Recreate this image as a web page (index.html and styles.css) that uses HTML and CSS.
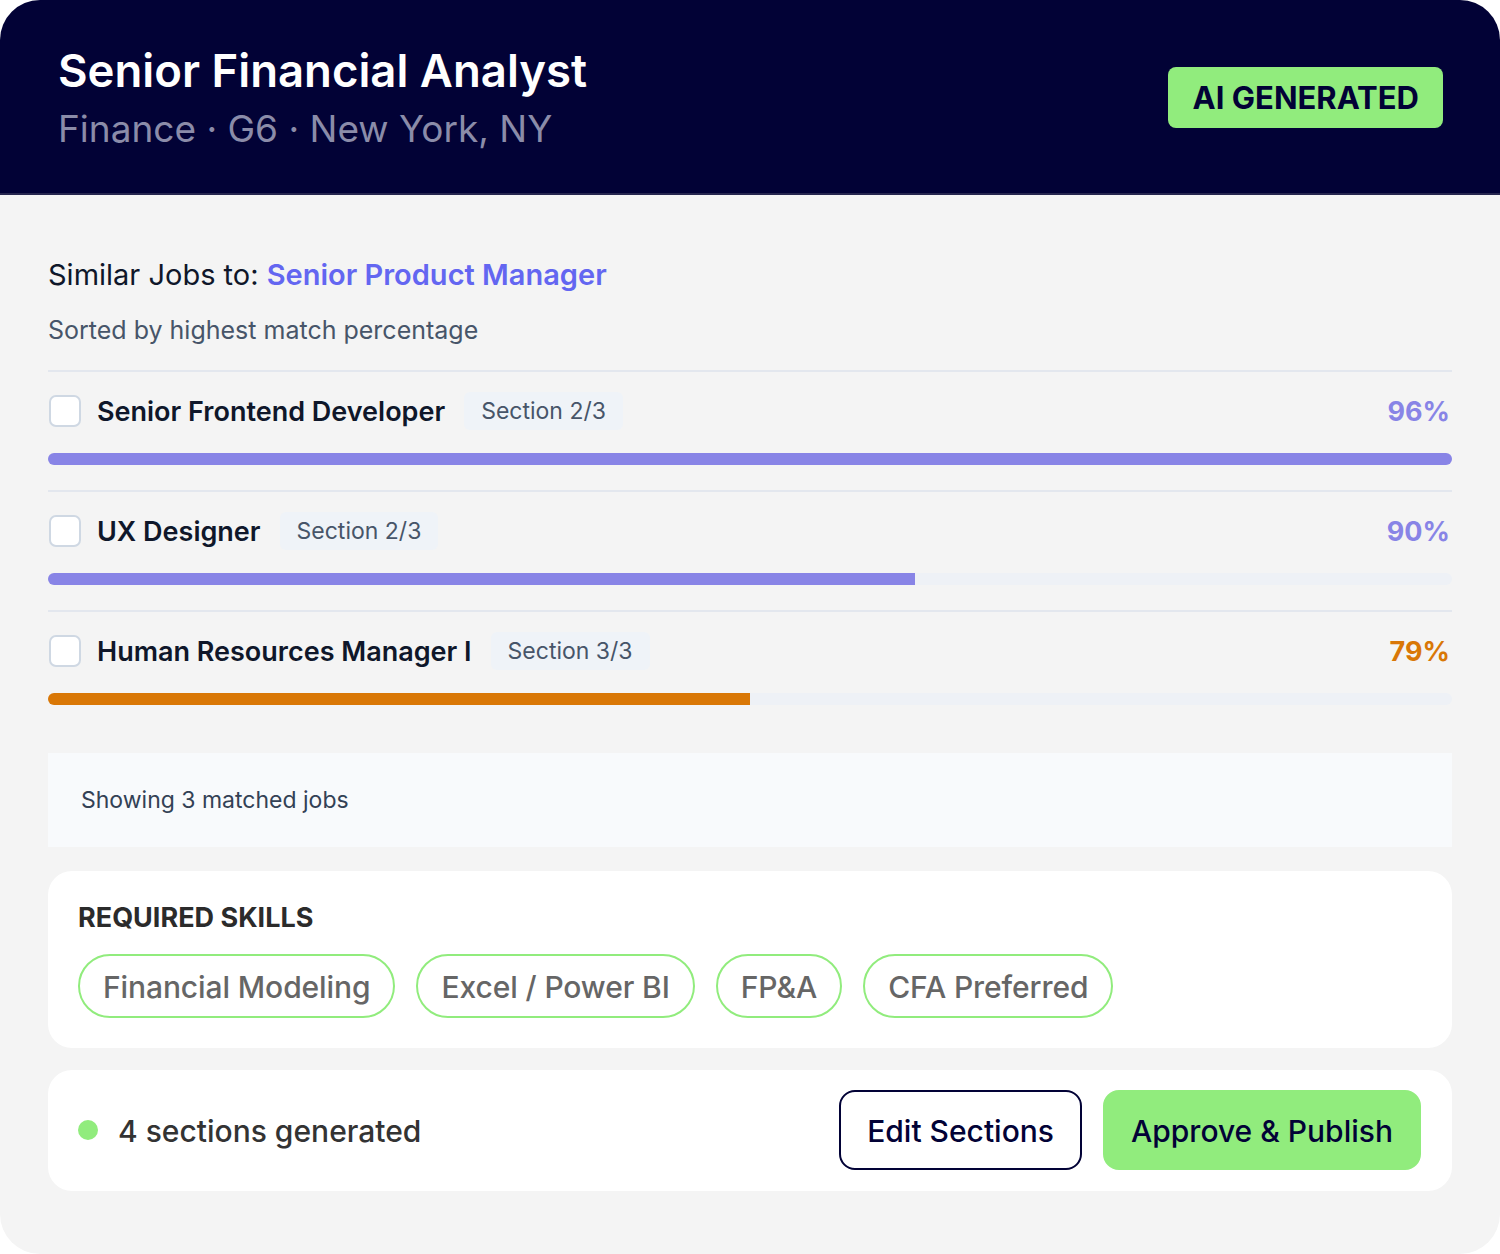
FILE: index.html
```html
<!DOCTYPE html>
<html lang="en">
<head>
  <meta charset="UTF-8" />
  <meta name="viewport" content="width=device-width, initial-scale=1.0"/>
  <title>Senior Financial Analyst : Similar Jobs</title>
  <link rel="stylesheet" href="styles.css">
</head>
<body>
  <div class="panel">
    <header class="panel-head">
      <div class="head-text">
        <h1>Senior Financial Analyst</h1>
        <p class="meta">Finance · G6 · New York, NY</p>
      </div>
      <span class="badge">AI GENERATED</span>
    </header>

    <main class="panel-body">
      <h2 class="similar">Similar Jobs to: <span class="ref-job">Senior Product Manager</span></h2>
      <p class="sorted">Sorted by highest match percentage</p>

      <ul class="jobs">
        <li class="job">
          <div class="job-top">
            <span class="check"></span>
            <span class="job-name">Senior Frontend Developer</span>
            <span class="section-tag">Section 2/3</span>
            <span class="pct">96%</span>
          </div>
          <div class="track"><div class="fill" style="width:100%"></div></div>
        </li>
        <li class="job">
          <div class="job-top">
            <span class="check"></span>
            <span class="job-name">UX Designer</span>
            <span class="section-tag">Section 2/3</span>
            <span class="pct">90%</span>
          </div>
          <div class="track"><div class="fill" style="width:61.75%"></div></div>
        </li>
        <li class="job low">
          <div class="job-top">
            <span class="check"></span>
            <span class="job-name">Human Resources Manager I</span>
            <span class="section-tag">Section 3/3</span>
            <span class="pct">79%</span>
          </div>
          <div class="track"><div class="fill" style="width:50%"></div></div>
        </li>
      </ul>

      <div class="summary">Showing 3 matched jobs</div>

      <section class="card skills">
        <h3>REQUIRED SKILLS</h3>
        <div class="skill-list">
          <span class="skill">Financial Modeling</span>
          <span class="skill">Excel / Power BI</span>
          <span class="skill">FP&amp;A</span>
          <span class="skill">CFA Preferred</span>
        </div>
      </section>

      <section class="card actions">
        <div class="status">
          <span class="dot"></span>
          4 sections generated
        </div>
        <div class="buttons">
          <button class="btn-outline">Edit Sections</button>
          <button class="btn-primary">Approve &amp; Publish</button>
        </div>
      </section>
    </main>
  </div>
</body>
</html>
```

FILE: styles.css
```css
:root {
  --navy: #020236;
  --green: #91ec7d;
  --purple: #8884e6;
  --orange: #d97706;
  --page: #f4f4f4;
}

* {
  box-sizing: border-box;
}

body {
  margin: 0;
  background: #ffffff;
  font-family: Inter, "Noto Sans", sans-serif;
}

.panel {
  width: 1500px;
  height: 1254px;
  border-radius: 40px;
  overflow: hidden;
  background: var(--page);
}

.panel-head {
  display: flex;
  justify-content: space-between;
  align-items: center;
  height: 195px;
  padding: 0 57px 0 58px;
  background: var(--navy);
  border-bottom: 2px solid #26264f;
}

.head-text {
  padding-top: 2px;
}

.panel-head h1 {
  margin: 0;
  color: #ffffff;
  font-size: 45.5px;
  font-weight: 600;
  line-height: 54px;
}

.meta {
  margin: 9px 0 0;
  color: #8b8ca9;
  font-size: 37px;
  line-height: 44px;
}

.badge {
  display: inline-block;
  margin-top: 2px;
  padding: 12px 24px 12px 25px;
  border-radius: 8px;
  background: var(--green);
  color: var(--navy);
  font-size: 31px;
  font-weight: 700;
  line-height: 37px;
}

.panel-body {
  padding: 62px 48px 0;
}

.similar {
  margin: 0;
  color: #0f172a;
  font-size: 29px;
  font-weight: 400;
  line-height: 36px;
}

.ref-job {
  color: #6366f1;
  font-weight: 600;
}

.sorted {
  margin: 20px 0 23px;
  color: #475569;
  font-size: 25px;
  line-height: 34px;
}

.jobs {
  list-style: none;
  margin: 0;
  padding: 0;
}

.job {
  border-top: 2px solid #e3e7ee;
  padding: 23px 0 25px;
}

.job-top {
  display: flex;
  align-items: center;
  height: 32px;
}

.check {
  width: 32px;
  height: 32px;
  margin-left: 1px;
  border: 2px solid #cfd8e3;
  border-radius: 7px;
  background: #ffffff;
}

.job-name {
  margin-left: 16px;
  color: #0f172a;
  font-size: 27px;
  font-weight: 600;
}

.section-tag {
  margin-left: 19px;
  padding: 3px 17px;
  border-radius: 6px;
  background: #eff3f8;
  color: #475569;
  font-size: 23px;
  line-height: 32px;
}

.pct {
  margin-left: auto;
  padding-right: 2px;
  color: var(--purple);
  font-size: 27px;
  font-weight: 700;
}

.track {
  height: 12px;
  margin-top: 26px;
  border-radius: 6px;
  background: #eef1f6;
}

.fill {
  height: 100%;
  border-radius: 6px 0 0 6px;
  background: var(--purple);
}

.job:first-child .fill {
  border-radius: 6px;
}

.low .pct {
  color: var(--orange);
}

.low .fill {
  background: var(--orange);
}

.summary {
  margin-top: 23px;
  padding: 0 33px;
  height: 94px;
  display: flex;
  align-items: center;
  background: #f8fafc;
  color: #334155;
  font-size: 23px;
}

.card {
  background: #ffffff;
  border-radius: 24px;
}

.skills {
  margin-top: 24px;
  padding: 30px 30px 30px;
}

.skills h3 {
  margin: 0;
  color: #2b2b2b;
  font-size: 27px;
  font-weight: 700;
  line-height: 34px;
}

.skill-list {
  display: flex;
  gap: 21px;
  margin-top: 19px;
}

.skill {
  height: 64px;
  padding: 1px 23px 0;
  display: flex;
  align-items: center;
  border: 2px solid var(--green);
  border-radius: 32px;
  color: #666666;
  font-size: 30px;
  font-weight: 500;
  letter-spacing: -0.1px;
}

.actions {
  margin-top: 22px;
  padding: 20px 31px 21px 30px;
  display: flex;
  justify-content: space-between;
  align-items: center;
}

.status {
  display: flex;
  align-items: center;
  gap: 20px;
  padding-top: 2px;
  color: #333333;
  font-size: 30px;
  font-weight: 500;
}

.dot {
  width: 20px;
  height: 20px;
  margin-top: -2px;
  border-radius: 50%;
  background: var(--green);
}

.buttons {
  display: flex;
  gap: 21px;
}

.buttons button {
  height: 80px;
  padding: 2px 26px 0;
  border-radius: 16px;
  font-family: inherit;
  font-size: 30px;
  font-weight: 500;
  color: var(--navy);
  cursor: pointer;
}

.btn-outline {
  border: 2px solid var(--navy);
  background: #ffffff;
}

.btn-primary {
  border: 2px solid var(--green);
  background: var(--green);
}
```
